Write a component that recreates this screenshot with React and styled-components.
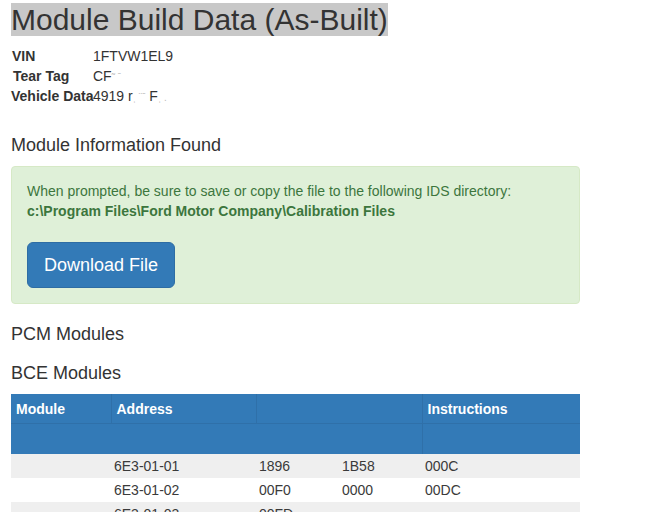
import React from 'react'
import styled, { createGlobalStyle } from 'styled-components'

const Global = createGlobalStyle`
  body {
    margin: 0;
    background: #fff;
    font-family: "Liberation Sans", Arial, sans-serif;
    font-size: 14px;
    line-height: 20px;
    color: #333;
  }
`

const Page = styled.div`
  height: 512px;
  overflow: hidden;
  padding-left: 11px;
  width: 569px;
`

const Title = styled.h1`
  margin: 3px 0 0;
  font-size: 30px;
  font-weight: normal;
  line-height: 33px;
  height: 33px;
  span {
    background: #c8c8c8;
    color: #333;
  }
`

const Facts = styled.div`
  margin-top: 10px;
`

const Fact = styled.div`
  display: flex;
  height: 20px;
  padding-left: ${p => p.$shift || 0}px;
  b {
    font-weight: bold;
    width: ${p => 82 - (p.$shift || 0)}px;
    flex: none;
    white-space: nowrap;
  }
  span { white-space: nowrap; }
  i { font-style: normal; color: #bbb; font-size: 10px; }
`

const Heading = styled.h4`
  margin: ${p => p.$top}px 0 0;
  font-size: 18px;
  font-weight: normal;
  line-height: 20px;
`

const Alert = styled.div`
  margin-top: 11px;
  background: #dff0d8;
  border: 1px solid #d6e9c6;
  border-radius: 4px;
  padding: 14px 15px 15px;
  color: #3c763d;
  p { margin: 0; }
  strong { font-weight: bold; }
`

const Button = styled.button`
  margin-top: 21px;
  display: block;
  font-family: inherit;
  font-size: 18px;
  line-height: 24px;
  padding: 10px 16px;
  color: #fff;
  background: #337ab7;
  border: 1px solid #2e6da4;
  border-radius: 6px;
`

const Table = styled.table`
  margin-top: 11px;
  width: 569px;
  border-collapse: collapse;
  table-layout: fixed;
  th {
    background: #337ab7;
    color: #fff;
    text-align: left;
    font-weight: bold;
    padding: 5px 5px 4px;
    line-height: 20px;
    border: 1px solid #2f70a9;
    border-top: none;
    height: 19px;
  }
  th:first-child { border-left: none; }
  th:last-child { border-right: none; }
  thead tr:nth-child(2) th { height: 21px; border-bottom: none; }
  td {
    padding: 2px 3px;
    line-height: 20px;
    color: #3a3a3a;
  }
  tbody tr:nth-child(odd) td { background: #efefef; }
`

const rows = [
  ['', '6E3-01-01', '1896', '1B58', '000C'],
  ['', '6E3-01-02', '00F0', '0000', '00DC'],
  ['', '6E3-01-03', '00FD', '', ''],
]

export default function App() {
  return (
    <>
      <Global />
      <Page>
        <Title><span>Module Build Data (As-Built)</span></Title>
        <Facts>
          <Fact $shift={1}><b>VIN</b><span>1FTVW1EL9</span></Fact>
          <Fact $shift={2}><b>Tear Tag</b><span>CF<i>˜ ˉ</i></span></Fact>
          <Fact><b>Vehicle Data</b><span>4919 r<i>ˌ ¨ˉ</i> F<i>ˌ  .</i></span></Fact>
        </Facts>
        <Heading $top={29}>Module Information Found</Heading>
        <Alert>
          <p>When prompted, be sure to save or copy the file to the following IDS directory:</p>
          <p><strong>c:\Program Files\Ford Motor Company\Calibration Files</strong></p>
          <Button>Download File</Button>
        </Alert>
        <Heading $top={20}>PCM Modules</Heading>
        <Heading $top={19}>BCE Modules</Heading>
        <Table>
          <colgroup>
            <col style={{ width: 100 }} />
            <col style={{ width: 145 }} />
            <col style={{ width: 83 }} />
            <col style={{ width: 83 }} />
            <col style={{ width: 158 }} />
          </colgroup>
          <thead>
            <tr>
              <th>Module</th>
              <th>Address</th>
              <th colSpan={2}></th>
              <th>Instructions</th>
            </tr>
            <tr>
              <th colSpan={4}></th>
              <th></th>
            </tr>
          </thead>
          <tbody>
            {rows.map((r, i) => (
              <tr key={i}>
                {r.map((c, j) => <td key={j}>{c}</td>)}
              </tr>
            ))}
          </tbody>
        </Table>
      </Page>
    </>
  )
}
